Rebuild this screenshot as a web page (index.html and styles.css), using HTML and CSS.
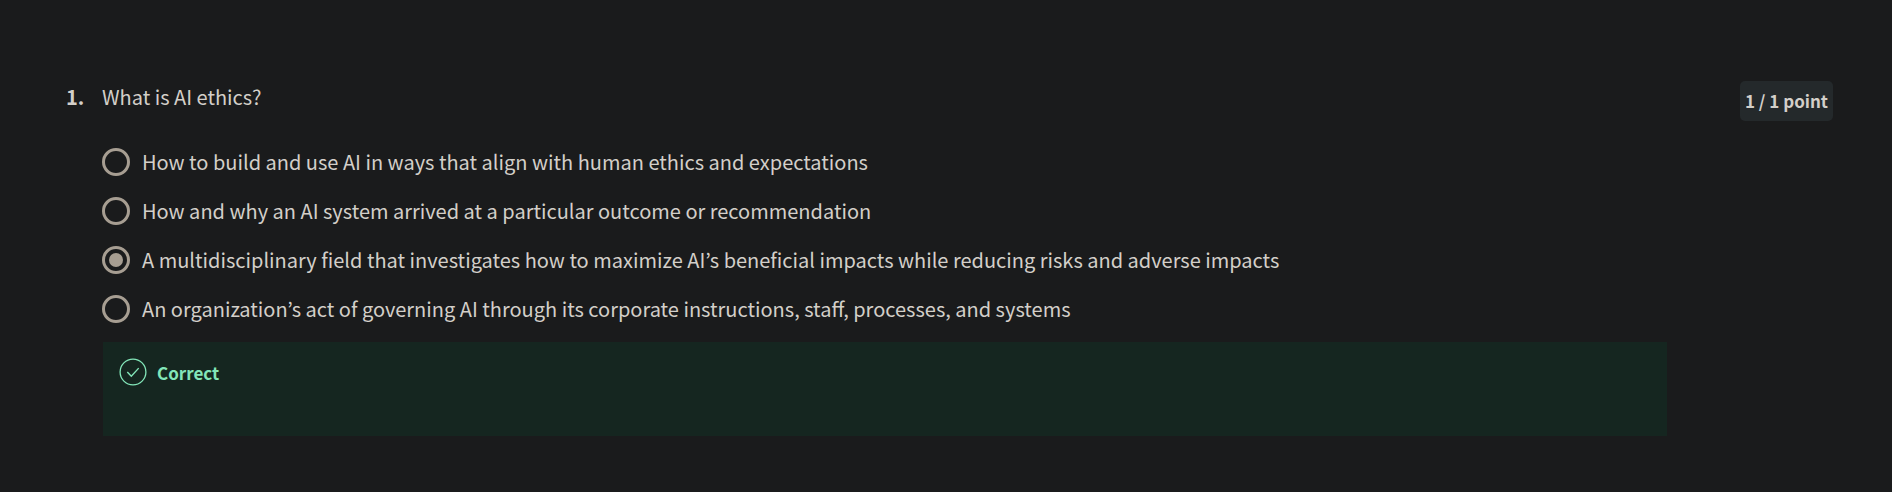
FILE: index.html
```html
<!DOCTYPE html>
<html lang="en">
<head>
<meta charset="utf-8">
<meta name="viewport" content="width=device-width, initial-scale=1">
<title>Quiz</title>
<link rel="stylesheet" href="styles.css">
</head>
<body>
<main class="question">
  <span class="number">1.</span>
  <fieldset class="body">
    <legend class="prompt">What is AI ethics?</legend>
    <div class="options">
      <label class="option"><input class="radio" type="radio" name="q1"><span>How to build and use AI in ways that align with human ethics and expectations</span></label>
      <label class="option"><input class="radio" type="radio" name="q1"><span>How and why an AI system arrived at a particular outcome or recommendation</span></label>
      <label class="option"><input class="radio" type="radio" name="q1" checked><span>A multidisciplinary field that investigates how to maximize AI’s beneficial impacts while reducing risks and adverse impacts</span></label>
      <label class="option"><input class="radio" type="radio" name="q1"><span>An organization’s act of governing AI through its corporate instructions, staff, processes, and systems</span></label>
    </div>
    <div class="feedback">
      <svg class="check" viewBox="0 0 28 28" fill="none" stroke="currentColor" aria-hidden="true">
        <circle cx="14" cy="14" r="12.9" stroke-width="1.3"/>
        <path d="M8.3 14l4 4.3 7.4-8.2" stroke-width="1.4"/>
      </svg>
      <strong>Correct</strong>
    </div>
  </fieldset>
  <div class="score"><span class="points">1 / 1 point</span></div>
</main>
</body>
</html>
```
FILE: styles.css
```css
* {
  box-sizing: border-box;
}

body {
  margin: 0;
  background: #1a1b1c;
  color: #d3cfc9;
  font: 20px/30px "Noto Sans CJK KR", "Noto Sans", sans-serif;
}

.question {
  display: grid;
  grid-template-columns: 36px 1fr 166px;
  align-items: start;
  padding: 81px 59px 55px 66px;
}

.number {
  font-weight: 700;
  line-height: 32px;
}

.body {
  min-width: 0;
  margin: 0;
  padding: 0;
  border: 0;
}

.prompt {
  padding: 0;
  line-height: 32px;
}

.options {
  display: grid;
  gap: 19px;
  padding-top: 34px;
}

.option {
  display: flex;
  align-items: center;
  gap: 12px;
}

.radio {
  appearance: none;
  flex: none;
  display: grid;
  place-items: center;
  width: 28px;
  height: 28px;
  margin: 0;
  border: 3px solid #a79e92;
  border-radius: 50%;
}

.radio:checked::before {
  content: "";
  width: 14px;
  height: 14px;
  border-radius: 50%;
  background: #a79e92;
}

.feedback {
  display: flex;
  align-items: flex-start;
  gap: 10px;
  min-height: 94px;
  margin: 18px 0 0 1px;
  padding: 16px;
  background: #152620;
  color: #83e6b9;
  font-size: 17px;
}

.check {
  flex: none;
  width: 28px;
  height: 28px;
}

.score {
  display: flex;
  justify-content: flex-end;
}

.points {
  padding: 5px;
  border-radius: 5px;
  background: #24292b;
  font-size: 17px;
  font-weight: 700;
}
```
